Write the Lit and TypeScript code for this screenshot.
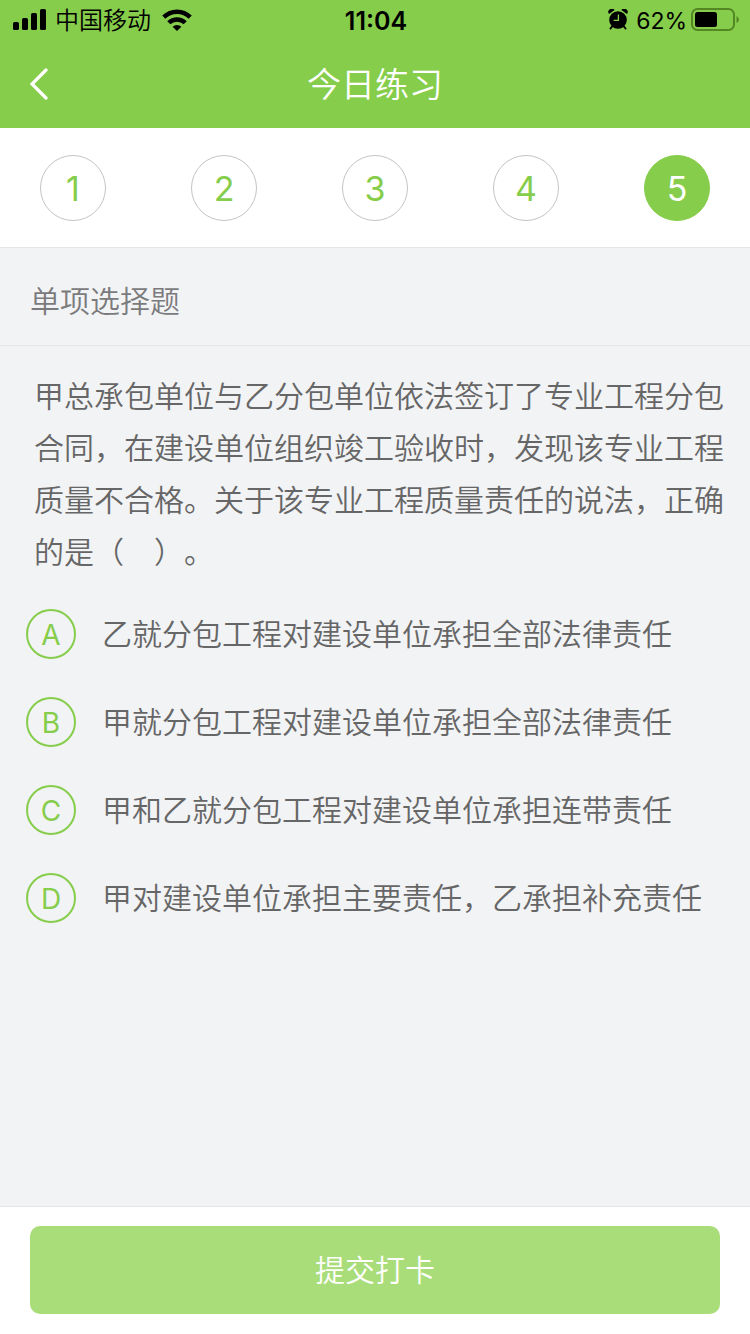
import { LitElement, html, css } from "lit";
import { customElement, state } from "lit/decorators.js";
import { classMap } from "lit/directives/class-map.js";

const OPTIONS = [
  { key: "A", text: "乙就分包工程对建设单位承担全部法律责任" },
  { key: "B", text: "甲就分包工程对建设单位承担全部法律责任" },
  { key: "C", text: "甲和乙就分包工程对建设单位承担连带责任" },
  { key: "D", text: "甲对建设单位承担主要责任，乙承担补充责任" },
];

@customElement("status-bar")
class StatusBar extends LitElement {
  static styles = css`
    :host {
      display: grid;
      grid-template-columns: 1fr auto 1fr;
      align-items: center;
      height: 40px;
      padding: 0 11px 0 13px;
      color: #000;
      font-size: 24px;
      line-height: 36px;
    }
    .left,
    .right {
      display: flex;
      align-items: center;
    }
    .carrier,
    .time,
    .percent {
      padding-top: 2px;
    }
    .carrier {
      margin: 0 11px 0 9px;
      font-weight: 350;
    }
    .right {
      justify-content: flex-end;
    }
    .time {
      font-size: 25px;
      font-weight: 600;
    }
    .percent {
      margin: 0 4px 0 8px;
      font-size: 23px;
    }
    svg {
      display: block;
    }
  `;

  render() {
    return html`
      <div class="left">
        <svg width="33" height="22" viewBox="0 0 33 22" aria-hidden="true">
          <rect x="0" y="13" width="6" height="8" rx="1.6" />
          <rect x="9" y="9" width="6" height="12" rx="1.6" />
          <rect x="18" y="4" width="6" height="17" rx="1.6" />
          <rect x="27" y="0" width="6" height="21" rx="1.6" />
        </svg>
        <span class="carrier">中国移动</span>
        <svg width="30" height="22" viewBox="0 0 30 22" aria-hidden="true">
          <g fill="none" stroke="#000" stroke-width="4.4">
            <path d="M1.8 8.1A18.8 18.8 0 0 1 28.2 8.1" />
            <path d="M6.8 13.8A11.7 11.7 0 0 1 23.2 13.8" />
          </g>
          <path d="M15 22L10.6 17.8A6.6 6.6 0 0 1 19.4 17.8Z" />
        </svg>
      </div>
      <span class="time">11:04</span>
      <div class="right">
        <svg width="20" height="22" viewBox="0 0 20 22" aria-hidden="true">
          <circle cx="10" cy="11" r="8.8" />
          <path d="M1 5A3.3 3.3 0 0 1 6.6 1Z" />
          <path d="M19 5A3.3 3.3 0 0 0 13.4 1Z" />
          <path d="M4 17.6L2.4 19.6M16 17.6L17.6 19.6" stroke="#000" stroke-width="1.8" stroke-linecap="round" />
          <path d="M10.4 5.4V11.4H5.6" fill="none" stroke="#86cd4b" stroke-width="1.3" />
        </svg>
        <span class="percent">62%</span>
        <svg width="48" height="24" viewBox="0 0 48 24" aria-hidden="true">
          <rect x="1" y="1" width="42" height="21" rx="5.5" fill="none" stroke="#538723" stroke-width="2" />
          <rect x="4" y="4" width="22" height="15" rx="2.5" />
          <path d="M45.5 8Q48 9.5 48 11.5T45.5 15Z" fill="#538723" />
        </svg>
      </div>
    `;
  }
}

@customElement("app-root")
class AppRoot extends LitElement {
  @state() current = 5;
  @state() answer = "";

  static styles = css`
    :host {
      display: flex;
      flex-direction: column;
      min-height: 100vh;
      background: #f2f3f5;
      color: #666;
      font-family: Inter, "Noto Sans CJK SC", sans-serif;
      font-size: 30px;
      text-spacing-trim: space-all;
    }
    * {
      box-sizing: border-box;
    }
    button {
      padding: 0;
      border: 0;
      background: none;
      font: inherit;
      cursor: pointer;
    }
    .top {
      background: #86cd4b;
    }
    .title-bar {
      display: grid;
      grid-template-columns: 78px 1fr 78px;
      align-items: center;
      height: 88px;
      color: #fff;
    }
    .title {
      margin: 0;
      padding-top: 2px;
      font-size: 34px;
      font-weight: 350;
      line-height: 48px;
      text-align: center;
    }
    .back {
      display: flex;
      justify-content: center;
      align-items: center;
      height: 88px;
    }
    .steps {
      display: flex;
      justify-content: space-between;
      padding: 27px 40px 26px;
      border-bottom: 1px solid #e4e5e7;
      background: #fff;
    }
    .step {
      width: 66px;
      height: 66px;
      padding-top: 2px;
      border: 1px solid #c4c4c6;
      border-radius: 50%;
      color: #86cd4b;
      font-size: 34px;
      line-height: 62px;
    }
    .step.active {
      border-color: #86cd4b;
      background: #86cd4b;
      color: #fff;
    }
    .content {
      flex: 1;
    }
    .kind {
      margin: 0;
      padding: 33px 30px 24px;
      border-bottom: 1px solid #e6e7e9;
      color: #7b7b7d;
      font-size: 30px;
      font-weight: 350;
      line-height: 40px;
    }
    .question {
      margin: 0;
      padding: 24px 26px 0 34px;
      font-weight: 350;
      line-height: 52px;
    }
    .options {
      display: grid;
      gap: 38px;
      margin: 0;
      padding: 31px 26px;
      border: 0;
    }
    .option {
      display: flex;
      align-items: center;
      gap: 26px;
      font-weight: 350;
      line-height: 50px;
      cursor: pointer;
    }
    .letter {
      display: grid;
      place-items: center;
      flex: none;
      width: 50px;
      height: 50px;
      padding-top: 2px;
      border: 2px solid #86cd4b;
      border-radius: 50%;
      color: #86cd4b;
      font-size: 28px;
      font-weight: 400;
      line-height: 44px;
    }
    .radio {
      position: absolute;
      opacity: 0;
      pointer-events: none;
    }
    .radio:checked + .letter {
      background: #86cd4b;
      color: #fff;
    }
    .footer {
      padding: 19px 30px 20px;
      border-top: 1px solid #e4e5e7;
      background: #fff;
    }
    .submit {
      display: block;
      width: 100%;
      border-radius: 10px;
      background: #a9dd7a;
      color: #fff;
      font-weight: 350;
      line-height: 88px;
    }
  `;

  render() {
    return html`
      <header class="top">
        <status-bar></status-bar>
        <div class="title-bar">
          <button class="back" aria-label="返回">
            <svg width="20" height="32" viewBox="0 0 20 32" aria-hidden="true">
              <path d="M17 2L3 16L17 30" fill="none" stroke="#fff" stroke-width="3.2" stroke-linecap="round" />
            </svg>
          </button>
          <h1 class="title">今日练习</h1>
        </div>
      </header>
      <nav class="steps">
        ${[1, 2, 3, 4, 5].map(
          (n) => html`<button
            class=${classMap({ step: true, active: n === this.current })}
            @click=${() => (this.current = n)}
          >${n}</button>`
        )}
      </nav>
      <main class="content">
        <h2 class="kind">单项选择题</h2>
        <p class="question">甲总承包单位与乙分包单位依法签订了专业工程分包合同，在建设单位组织竣工验收时，发现该专业工程质量不合格。关于该专业工程质量责任的说法，正确的是（　）。</p>
        <fieldset class="options">
          ${OPTIONS.map(
            (o) => html`<label class="option">
              <input
                class="radio"
                type="radio"
                name="answer"
                .value=${o.key}
                .checked=${this.answer === o.key}
                @change=${() => (this.answer = o.key)}
              />
              <span class="letter">${o.key}</span>
              <span>${o.text}</span>
            </label>`
          )}
        </fieldset>
      </main>
      <footer class="footer">
        <button class="submit">提交打卡</button>
      </footer>
    `;
  }
}
